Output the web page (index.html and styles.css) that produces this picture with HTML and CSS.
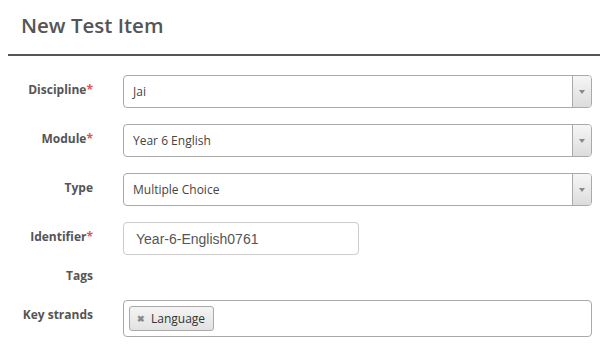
FILE: index.html
```html
<!DOCTYPE html>
<html>
<head>
  <link rel="stylesheet" href="styles.css">
</head>
<body>
  <div class="page-header">
    <h1>New Test Item</h1>
  </div>

  <form class="item-form">
    <div class="form-row">
      <label class="row-label">Discipline<span class="req">*</span></label>
      <div class="select-box">
        <span class="select-text">Jai</span>
        <span class="select-arrow"><b></b></span>
      </div>
    </div>

    <div class="form-row">
      <label class="row-label">Module<span class="req">*</span></label>
      <div class="select-box">
        <span class="select-text">Year 6 English</span>
        <span class="select-arrow"><b></b></span>
      </div>
    </div>

    <div class="form-row">
      <label class="row-label">Type</label>
      <div class="select-box">
        <span class="select-text">Multiple Choice</span>
        <span class="select-arrow"><b></b></span>
      </div>
    </div>

    <div class="form-row identifier-row">
      <label class="row-label" for="identifier">Identifier<span class="req">*</span></label>
      <input type="text" id="identifier" class="text-input" value="Year-6-English0761">
    </div>

    <div class="form-row tags-row">
      <label class="row-label">Tags</label>
    </div>

    <div class="form-row">
      <label class="row-label">Key strands</label>
      <div class="chip-box">
        <span class="chip"><span class="chip-x">&#10006;</span>Language</span>
      </div>
    </div>
  </form>
</body>
</html>
```

FILE: styles.css
```css
body {
  margin: 0;
  background-color: #ffffff;
  font-family: "Open Sans", Arial, sans-serif;
  color: #555555;
}

.page-header {
  margin-left: 8px;
  padding: 11px 0 15px 13px;
  border-bottom: 2px solid #555555;
}

.page-header h1 {
  margin: 0;
  font-size: 20.5px;
  font-weight: 600;
  line-height: 28px;
  color: #555555;
}

.item-form {
  padding: 19px 0 0 8px;
}

.form-row {
  display: flex;
  align-items: flex-start;
  margin-bottom: 16px;
}

.row-label {
  width: 85px;
  margin-right: 30px;
  padding-top: 6px;
  text-align: right;
  font-size: 12px;
  font-weight: 700;
  line-height: 18px;
  color: #555555;
}

.req {
  color: #e05555;
}

.select-box {
  display: flex;
  align-items: center;
  width: 469px;
  height: 33px;
  box-sizing: border-box;
  border: 1px solid #aaaaaa;
  border-radius: 4px;
  overflow: hidden;
}

.select-text {
  flex: 1;
  padding-left: 9px;
  font-size: 12px;
  color: #444444;
}

.select-arrow {
  display: flex;
  align-items: center;
  justify-content: center;
  width: 18px;
  height: 100%;
  border-left: 1px solid #aaaaaa;
  background: linear-gradient(#f6f6f6, #dcdcdc);
}

.select-arrow b {
  width: 0;
  height: 0;
  border-left: 3px solid transparent;
  border-right: 3px solid transparent;
  border-top: 4px solid #888888;
}

.identifier-row {
  margin-bottom: 12px;
}

.text-input {
  width: 236px;
  height: 33px;
  box-sizing: border-box;
  margin: 0;
  padding: 0 0 0 12px;
  border: 1px solid #cccccc;
  border-radius: 4px;
  font-family: "Liberation Sans", Arial, sans-serif;
  font-size: 14px;
  color: #555555;
}

.tags-row {
  margin-bottom: 15px;
}

.tags-row .row-label {
  padding-top: 0;
}

.chip-box {
  width: 469px;
  height: 37px;
  box-sizing: border-box;
  border: 1px solid #aaaaaa;
  border-radius: 4px;
  padding: 4px 0 0 5px;
}

.chip {
  display: inline-flex;
  align-items: center;
  height: 25px;
  box-sizing: border-box;
  padding: 0 8px 0 7px;
  border: 1px solid #aaaaaa;
  border-radius: 3px;
  background: linear-gradient(#f4f4f4, #e2e2e2);
  font-size: 12px;
  color: #333333;
}

.chip-x {
  margin-right: 6px;
  font-size: 9px;
  font-weight: 700;
  color: #888888;
}
```
